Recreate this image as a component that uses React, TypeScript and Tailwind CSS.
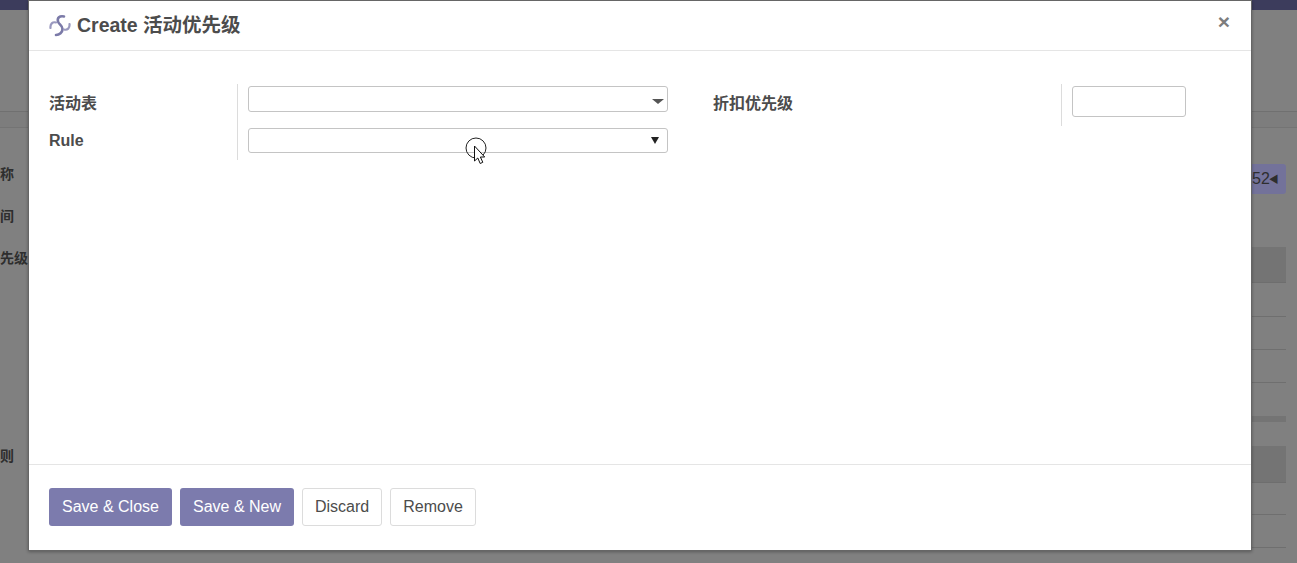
import React from "react";

const sans = "font-['Liberation_Sans','Noto_Sans_CJK_SC',sans-serif]";

const Logo = () => (
  <svg width="22" height="24" viewBox="0 0 22 24" fill="none" className="shrink-0">
    <path d="M15 2.5C10.5 1.5 8 4 9 7.5c.9 3 4.5 4 4.5 7.5 0 3.500-3 6-6.500 6" stroke="#7b7aa8" strokeWidth="2.600" strokeLinecap="round" />
    <path d="M1.500 14C1 10 3.500 7.500 7 8.500" stroke="#9a99bf" strokeWidth="2.200" strokeLinecap="round" />
    <path d="M20.500 10c.5 4-2 6.500-5.500 5.500" stroke="#9a99bf" strokeWidth="2.200" strokeLinecap="round" />
  </svg>
);

const CursorMark = () => (
  <svg width="26" height="32" viewBox="0 0 26 32" fill="none" className="absolute left-[464px] top-[136px]">
    <circle cx="12" cy="12" r="10" stroke="#222" strokeWidth="1" fill="none" />
    <path d="M10.500 10v15l3.300-3 2.400 5.500 2.600-1.200-2.400-5.300h4.300z" fill="#fff" stroke="#111" strokeWidth="1" strokeLinejoin="round" />
  </svg>
);

const Background = () => (
  <div className="flex h-full flex-col bg-[#808080] text-[#2e2e2e]">
    <div className="h-[10px] bg-[#3c3c5c]" />
    <div className="h-[102px] border-b border-[#707070]" />
    <div className="h-[16px] border-b border-[#747474] bg-[#7d7d7d]" />
    <div className="flex flex-1 justify-between">
      <div className="flex w-[29px] flex-col overflow-hidden whitespace-nowrap text-[14px] font-bold leading-[20px]">
        <div className="mt-[36px]">称</div>
        <div className="mt-[22px]">间</div>
        <div className="mt-[22px]">先级</div>
        <div className="mt-[178px]">则</div>
      </div>
      <div className="flex w-[45px] flex-col pr-[11px]">
        <div className="mt-[36px] flex h-[30px] items-center overflow-hidden rounded-r-[3px] bg-[#73729a] text-[16px] font-normal">
          <span>52</span>
          <span className="ml-[-1px] text-[10px]">◀</span>
        </div>
        <div className="mt-[53px] h-[36px] border-b border-[#6e6e6e] bg-[#747474]" />
        <div className="h-[34px] border-b border-[#6f6f6f]" />
        <div className="h-[33px] border-b border-[#6f6f6f]" />
        <div className="h-[33px] border-b border-[#6f6f6f]" />
        <div className="mt-[33px] h-[6px] bg-[#747474]" />
        <div className="mt-[24px] h-[37px] border-b border-[#6e6e6e] bg-[#747474]" />
        <div className="h-[32px] border-b border-[#6f6f6f]" />
        <div className="h-[33px] border-b border-[#6f6f6f]" />
      </div>
    </div>
  </div>
);

const Modal = () => (
  <div className="absolute left-[28px] top-0 flex h-[551px] w-[1224px] flex-col border border-[#666] bg-white text-[#4c4c4c] shadow-[0_1px_3px_rgba(0,0,0,0.3)]">
    <div className="flex h-[50px] shrink-0 items-center justify-between border-b border-[#e5e5e5] pl-[20px] pr-[21px]">
      <div className="flex items-center gap-[6px] text-[19.500px] font-bold">
        <Logo />
        <span>Create 活动优先级</span>
      </div>
      <span className="mb-[8px] text-[21px] font-bold leading-none text-[#7d7d7d]">×</span>
    </div>

    <div className="flex flex-1 pl-[20px] pt-[33px] text-[16px] font-bold">
      <div className="flex w-[664px]">
        <div className="flex w-[188px] flex-col">
          <div className="flex h-[42px] items-center pb-[3px]">活动表</div>
          <div className="flex h-[30px] items-center">Rule</div>
        </div>
        <div className="flex h-[76px] w-[432px] flex-col border-l border-[#dcdcdc] pl-[10px] pt-[2px]">
          <div className="relative h-[26px] w-[420px] rounded-[3px] border border-[#c4c4c4]">
            <span className="absolute right-[3px] top-[12px] h-0 w-0 border-x-[6px] border-t-[5px] border-x-transparent border-t-[#555]" />
          </div>
          <div className="relative mt-[16px] h-[25px] w-[420px] rounded-[3px] border border-[#c4c4c4]">
            <span className="absolute right-[8px] top-[8px] h-0 w-0 border-x-[4px] border-t-[7px] border-x-transparent border-t-[#222]" />
          </div>
        </div>
      </div>
      <div className="flex h-[42px]">
        <div className="flex w-[348px] items-center pb-[3px]">折扣优先级</div>
        <div className="flex h-[42px] border-l border-[#dcdcdc] pl-[10px] pt-[2px]">
          <div className="h-[31px] w-[114px] rounded-[3px] border border-[#c4c4c4]" />
        </div>
      </div>
    </div>

    <div className="flex h-[86px] shrink-0 items-center gap-[8px] border-t border-[#e5e5e5] pb-[1px] pl-[20px] text-[16px]">
      <button className="h-[38px] w-[123px] rounded-[3px] bg-[#7c7bad] text-white">Save &amp; Close</button>
      <button className="h-[38px] w-[114px] rounded-[3px] bg-[#7c7bad] text-white">Save &amp; New</button>
      <button className="h-[38px] w-[80px] rounded-[3px] border border-[#dcdcdc] text-[#4c4c4c]">Discard</button>
      <button className="h-[38px] w-[86px] rounded-[3px] border border-[#dcdcdc] text-[#4c4c4c]">Remove</button>
    </div>
  </div>
);

export default function App() {
  return (
    <div className={`relative h-[563px] w-[1297px] overflow-hidden ${sans}`}>
      <Background />
      <Modal />
      <CursorMark />
    </div>
  );
}
